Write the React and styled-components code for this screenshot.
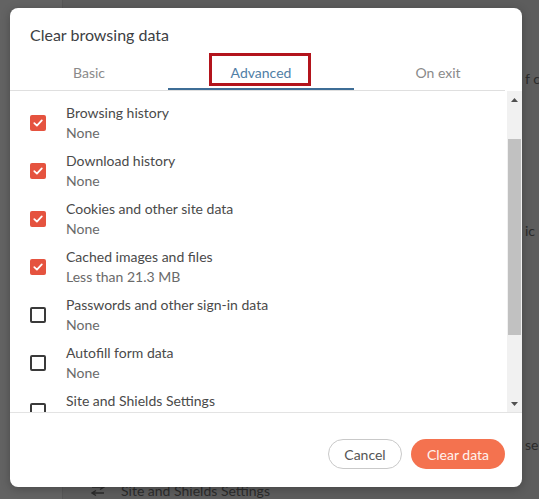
import styled, { createGlobalStyle } from "styled-components";

const GlobalStyle = createGlobalStyle`
  html, body {
    margin: 0;
    padding: 0;
    background: #5d5d5d;
  }
  body {
    font-family: Lato, "Noto Sans", "Liberation Sans", sans-serif;
  }
`;

const items = [
  { label: "Browsing history", sub: "None", checked: true },
  { label: "Download history", sub: "None", checked: true },
  { label: "Cookies and other site data", sub: "None", checked: true },
  { label: "Cached images and files", sub: "Less than 21.3 MB", checked: true },
  { label: "Passwords and other sign-in data", sub: "None", checked: false },
  { label: "Autofill form data", sub: "None", checked: false },
  { label: "Site and Shields Settings", sub: "None", checked: false },
];

const tabs = [
  { name: "Basic", width: 158 },
  { name: "Advanced", width: 186, active: true },
  { name: "On exit", width: 168 },
];

// bits of the settings page that peek out around the dialog
const behind = [
  { text: "f c", top: 70, right: true },
  { text: "ic r", top: 136, right: true },
  { text: "sel", top: 198, right: true },
  { text: "Site and Shields Settings", top: 30, icon: true },
];

export default function App() {
  return (
    <>
      <GlobalStyle />
      <Page>
        <Sidebar />
        <PageBody>
          {behind.map((b) => (
            <BehindRow key={b.text} $top={b.top} $right={b.right}>
              {b.icon && (
                <svg width="14" height="12" viewBox="0 0 14 12">
                  <path
                    d="M1 3 H13 M9 0.5 L13 3 L9 5.5 M13 9 H1 M5 6.5 L1 9 L5 11.5"
                    fill="none"
                    stroke="#2b2b2b"
                    strokeWidth="1.3"
                  />
                </svg>
              )}
              <BehindText>{b.text}</BehindText>
            </BehindRow>
          ))}
        </PageBody>

        <Dialog>
          <Title>Clear browsing data</Title>
          <Tabs>
            {tabs.map((t) => (
              <Tab key={t.name} $width={t.width} $active={t.active}>
                {t.name}
                {t.active && <Highlight />}
              </Tab>
            ))}
          </Tabs>
          <Body>
            <List>
              {items.map((it) => (
                <Item key={it.label}>
                  <Box $checked={it.checked}>
                    {it.checked && (
                      <svg width="12" height="12" viewBox="0 0 12 12">
                        <path
                          d="M2.3 6.2 L4.9 8.6 L9.8 3.4"
                          fill="none"
                          stroke="#fff"
                          strokeWidth="1.8"
                          strokeLinecap="round"
                          strokeLinejoin="round"
                        />
                      </svg>
                    )}
                  </Box>
                  <Texts>
                    <Label>{it.label}</Label>
                    <Sub>{it.sub}</Sub>
                  </Texts>
                </Item>
              ))}
            </List>
            <Scrollbar>
              <Arrow>
                <svg width="7" height="4" viewBox="0 0 7 4">
                  <path d="M0 4 L3.5 0 L7 4 Z" fill="#505050" />
                </svg>
              </Arrow>
              <Track>
                <Thumb />
              </Track>
              <Arrow>
                <svg width="7" height="4" viewBox="0 0 7 4">
                  <path d="M0 0 L3.5 4 L7 0 Z" fill="#505050" />
                </svg>
              </Arrow>
            </Scrollbar>
          </Body>
          <Footer>
            <CancelButton>Cancel</CancelButton>
            <ClearButton>Clear data</ClearButton>
          </Footer>
        </Dialog>
      </Page>
    </>
  );
}

/* ============ Styles ============ */
const Page = styled.div`
  position: relative;
  width: 539px;
  height: 499px;
  overflow: hidden;
  display: flex;
  background: #5d5d5d;
`;
const Sidebar = styled.div`
  width: 62px;
  flex-shrink: 0;
  background: #636363;
  border-right: 1px solid #575757;
`;
const PageBody = styled.div`
  flex: 1;
  display: flex;
  flex-direction: column;
  padding-left: 28px;
`;
const BehindRow = styled.div`
  height: 16px;
  margin-top: ${(p) => p.$top}px;
  padding-left: ${(p) => (p.$right ? "434px" : "0")};
  display: flex;
  align-items: center;
  gap: 16px;
  white-space: nowrap;
`;
const BehindText = styled.span`
  font-size: 14px;
  color: #2b2b2b;
`;
const Dialog = styled.div`
  position: absolute;
  left: 10px;
  top: 8px;
  width: 512px;
  height: 479px;
  background: #fff;
  border-radius: 8px;
  display: flex;
  flex-direction: column;
  box-shadow: 0 2px 10px rgba(0, 0, 0, 0.25);
`;
const Title = styled.div`
  padding: 16px 20px 0;
  height: 22px;
  font-size: 16px;
  color: #3c4043;
  line-height: 22px;
`;
const Tabs = styled.div`
  position: relative;
  display: flex;
  margin-top: 10px;
  &:after {
    content: "";
    position: absolute;
    left: 0;
    right: 17px;
    bottom: -1px;
    height: 1px;
    background: #dfdfdf;
  }
`;
const Tab = styled.div`
  position: relative;
  flex-shrink: 0;
  width: ${(p) => p.$width}px;
  height: 32px;
  display: flex;
  align-items: center;
  justify-content: center;
  font-size: 14px;
  color: ${(p) => (p.$active ? "#4f7ea6" : "#8a8a8a")};
  border-bottom: 2px solid ${(p) => (p.$active ? "#3e6d96" : "transparent")};
  z-index: 1;
`;
const Highlight = styled.span`
  position: absolute;
  left: 41px;
  top: -3px;
  width: 96px;
  height: 27px;
  border: 3px solid #b3141c;
`;
const Body = styled.div`
  margin-top: 1px;
  height: 321px;
  display: flex;
  border-bottom: 1px solid #e3e3e3;
`;
const List = styled.div`
  flex: 1;
  overflow: hidden;
  padding: 8px 0 0 20px;
  display: flex;
  flex-direction: column;
`;
const Item = styled.div`
  flex-shrink: 0;
  height: 40px;
  padding: 4px 0;
  display: flex;
  align-items: center;
  gap: 20px;
`;
const Box = styled.div`
  width: 16px;
  height: 16px;
  box-sizing: border-box;
  border-radius: 2px;
  display: flex;
  align-items: center;
  justify-content: center;
  background: ${(p) => (p.$checked ? "#e5533f" : "#fff")};
  border: ${(p) => (p.$checked ? "none" : "2px solid #3a3a3a")};
`;
const Texts = styled.div`
  display: flex;
  flex-direction: column;
`;
const Label = styled.div`
  font-size: 14px;
  line-height: 20px;
  color: #4a4a4a;
`;
const Sub = styled.div`
  font-size: 14px;
  line-height: 20px;
  color: #6a6a6a;
`;
const Scrollbar = styled.div`
  width: 15px;
  background: #f1f1f1;
  display: flex;
  flex-direction: column;
`;
const Arrow = styled.div`
  height: 17px;
  display: flex;
  align-items: center;
  justify-content: center;
`;
const Track = styled.div`
  flex: 1;
  padding-top: 31px;
`;
const Thumb = styled.div`
  height: 196px;
  margin: 0 1px;
  background: #c1c1c1;
`;
const Footer = styled.div`
  flex: 1;
  display: flex;
  justify-content: flex-end;
  align-items: flex-start;
  gap: 9px;
  padding: 26px 17px 0 0;
`;
const BaseButton = styled.button`
  height: 30px;
  border-radius: 15px;
  font-family: Lato, "Noto Sans", "Liberation Sans", sans-serif;
  font-size: 14px;
  padding: 0;
  cursor: pointer;
`;
const CancelButton = styled(BaseButton)`
  width: 74px;
  background: #fff;
  border: 1px solid #c9c9c9;
  color: #555;
`;
const ClearButton = styled(BaseButton)`
  width: 94px;
  border: none;
  background: #f4724f;
  color: #fff3ee;
`;
